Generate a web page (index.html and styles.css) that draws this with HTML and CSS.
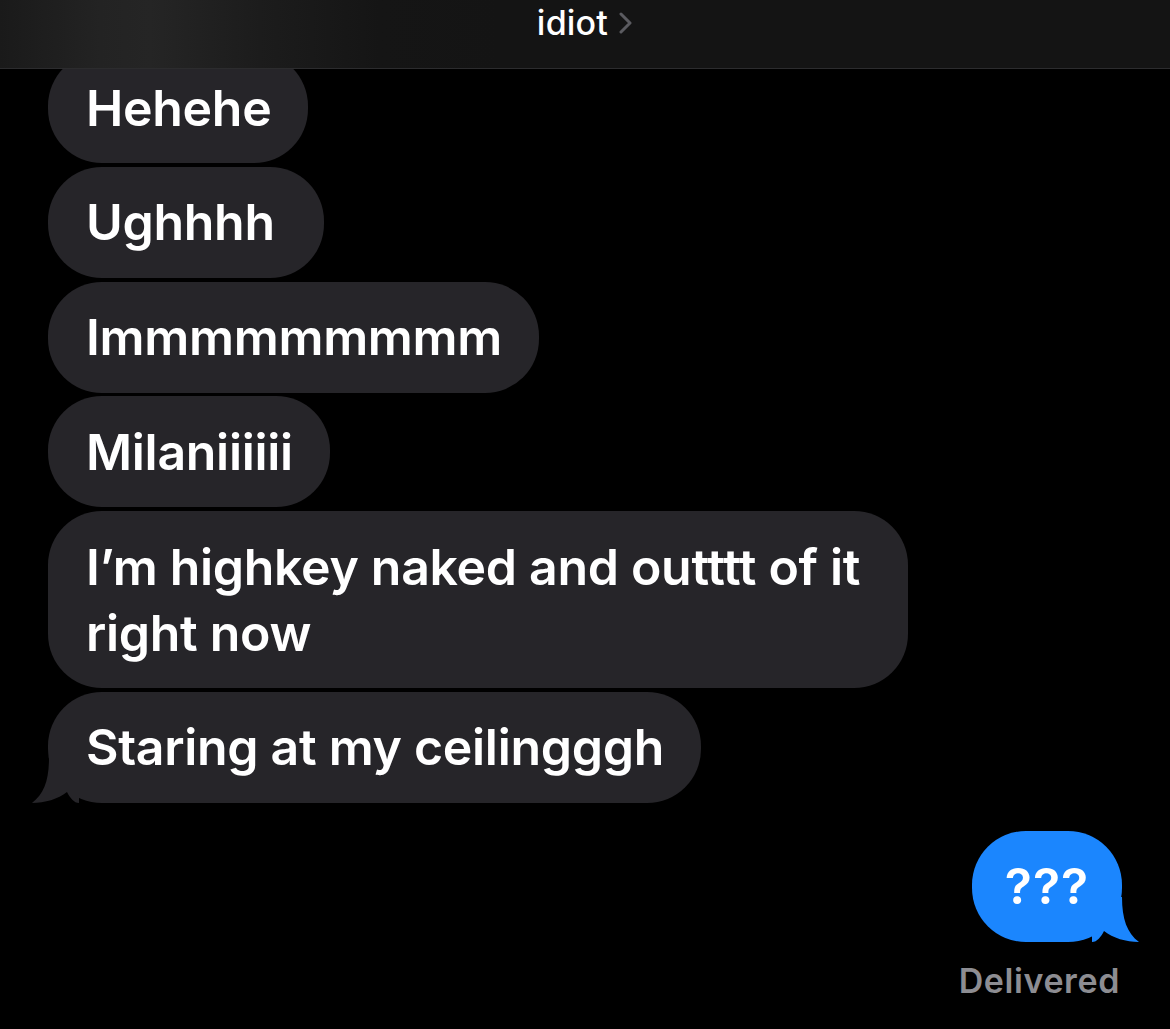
FILE: index.html
```html
<!DOCTYPE html>
<html lang="en">
<head>
<meta charset="utf-8">
<title>idiot</title>
<link rel="stylesheet" href="styles.css">
</head>
<body>
<div class="screen">
  <header class="nav">
    <div class="nav-title">
      <span class="name">idiot</span>
      <svg class="chev" width="14" height="22" viewBox="0 0 14 22"><polyline points="2,2 11,11 2,20" fill="none" stroke="#5b5b60" stroke-width="3" stroke-linecap="round" stroke-linejoin="round"/></svg>
    </div>
  </header>

  <main class="thread">
    <div class="bubble in">Hehehe</div>
    <div class="bubble in">Ughhhh&nbsp;</div>
    <div class="bubble in">Immmmmmmmm</div>
    <div class="bubble in">Milaniiiiii</div>
    <div class="bubble in">I’m highkey naked and outttt of it right now</div>
    <div class="bubble in tail">Staring at my ceilingggh
      <svg class="tail-svg" width="47" height="45" viewBox="0 0 47 45"><path d="M0 0 H30 C30 22 35 36 47 45 C34 45 21 41 12 34 C9 40 5 45 0 45 Z" fill="#262529"/></svg>
    </div>

    <div class="bubble out tail">???
      <svg class="tail-svg" width="47" height="45" viewBox="0 0 47 45"><path d="M0 0 H30 C30 22 35 36 47 45 C34 45 21 41 12 34 C9 40 5 45 0 45 Z" fill="#1b86fe"/></svg>
    </div>
    <div class="status">Delivered</div>
  </main>
</div>
</body>
</html>
```
FILE: styles.css
```css
* { box-sizing: border-box; }
html, body {
  margin: 0;
  padding: 0;
  background: #000;
}
body {
  font-family: Inter, "Noto Sans", "Liberation Sans", sans-serif;
  color: #fff;
}
.screen {
  position: relative;
  width: 1170px;
  height: 1029px;
  overflow: hidden;
  background: #000;
}
.nav {
  position: absolute;
  top: 0;
  left: 0;
  right: 0;
  height: 69px;
  z-index: 5;
  background: linear-gradient(90deg, #1a1a1a 0px, #232323 100px, #252525 150px, #1c1c1c 260px, #151515 380px, #141414 500px);
  border-bottom: 1px solid #2c2c2e;
  display: flex;
  justify-content: center;
}
.nav-title {
  display: flex;
  align-items: center;
  gap: 11px;
  height: 44px;
}
.name {
  font-size: 34px;
  font-weight: 500;
  letter-spacing: 0.2px;
}
.chev { margin-top: 2px; }

.thread {
  display: flex;
  flex-direction: column;
  align-items: flex-start;
  gap: 3.8px;
  padding: 52px 48px 0 48px;
}
.bubble {
  position: relative;
  max-width: 860px;
  font-size: 50px;
  font-weight: 600;
  line-height: 66px;
  letter-spacing: -0.3px;
  padding: 22.5px 37px 22.5px 38px;
  border-radius: 54px;
}
.bubble.in {
  background: #262529;
}
.bubble.out {
  align-self: flex-end;
  margin-top: 24px;
  background: #1b86fe;
  width: 150px;
  text-align: center;
  padding-left: 0;
  padding-right: 0;
  letter-spacing: 1px;
}
.tail-svg {
  position: absolute;
  bottom: 0;
  display: block;
}
.bubble.in .tail-svg {
  left: -16px;
  transform: scaleX(-1);
}
.bubble.out .tail-svg {
  right: -17px;
}
.status {
  align-self: flex-end;
  margin-top: 14px;
  margin-right: 2px;
  font-size: 34px;
  font-weight: 600;
  color: #8d8d92;
  letter-spacing: 0.6px;
}
```
